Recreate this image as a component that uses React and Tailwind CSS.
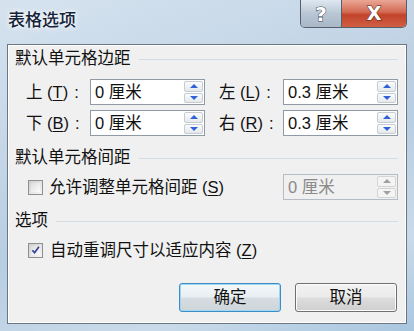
import React from 'react';

const font = { fontFamily: '"Liberation Sans", "Noto Sans CJK SC", sans-serif' };

function Key({ children }) {
  return <span className="underline underline-offset-2">{children}</span>;
}

function Spinner({ disabled }) {
  return (
    <div className="flex flex-col w-[20px] h-full py-[1px] pr-[1px] gap-[1px]">
      {['up', 'down'].map((d) => (
        <div
          key={d}
          className={`flex-1 flex items-center justify-center border rounded-[2px] ${
            disabled ? 'border-[#d4d4d4] bg-[#f4f4f4]' : 'border-[#c5ccd4] bg-[linear-gradient(#fbfbfb,#e6e9ec)]'
          }`}
        >
          {d === 'up' ? (
            <div
              className={`w-0 h-0 border-x-[4px] border-x-transparent border-b-[4px] ${
                disabled ? 'border-b-[#a0a0a0]' : 'border-b-[#2f62d8]'
              }`}
            />
          ) : (
            <div
              className={`w-0 h-0 border-x-[4px] border-x-transparent border-t-[4px] ${
                disabled ? 'border-t-[#a0a0a0]' : 'border-t-[#2f62d8]'
              }`}
            />
          )}
        </div>
      ))}
    </div>
  );
}

function SpinBox({ value, disabled }) {
  return (
    <div
      className={`flex items-stretch w-[115px] h-[26px] border ${
        disabled ? 'border-[#b5bcc4] bg-[#f0f0f0] text-[#8a8a8a]' : 'border-[#8f9aa6] bg-white text-[#111]'
      }`}
    >
      <div className="flex-1 flex items-center pl-[4px] text-[16.5px] leading-none whitespace-pre">{value}</div>
      <Spinner disabled={disabled} />
    </div>
  );
}

function Header({ children }) {
  return (
    <div className="flex items-center h-[20px] pl-[7px] pr-[8px]">
      <span className="text-[16.5px] leading-none text-[#111]">{children}</span>
      <div className="flex-1 h-px bg-[#d2dde6] ml-[8px] mt-[2px]" />
    </div>
  );
}

function Checkbox({ checked }) {
  return (
    <div className="w-[15px] h-[15px] border border-[#8e8f8f] bg-[linear-gradient(135deg,#cfcfcf,#f6f6f6)] p-[2px]">
      <div className="w-full h-full bg-[linear-gradient(135deg,#dedede,#fbfbfb)] flex items-center justify-center">
        {checked && (
          <svg width="10" height="10" viewBox="0 0 10 10">
            <path d="M1.5 5.2 L4 8 L8.8 1.5" fill="none" stroke="#2a3f9a" strokeWidth="1.8" />
          </svg>
        )}
      </div>
    </div>
  );
}

function Btn({ children, primary }) {
  return (
    <div
      className={`w-[102px] h-[29px] rounded-[3px] border flex items-center justify-center text-[16.5px] text-[#111] ${
        primary
          ? 'border-[#3d8dc4] shadow-[inset_0_0_0_1px_#9fd5f5] bg-[linear-gradient(#f3f8fb_0%,#e8eef2_48%,#d6dde2_52%,#cfd6da_100%)]'
          : 'border-[#707070] shadow-[inset_0_0_0_1px_#fcfcfc] bg-[linear-gradient(#f2f2f2_0%,#ebebeb_48%,#dddddd_52%,#cfcfcf_100%)]'
      }`}
    >
      {children}
    </div>
  );
}

const label = 'text-[16.5px] leading-none text-[#111] whitespace-pre';

function FieldLabel({ ch, k, className = '' }) {
  return (
    <div className={`w-[64px] ${label} ${className}`}>
      {ch} (<Key>{k}</Key>)<span className="ml-[6px]">:</span>
    </div>
  );
}

export default function App() {
  return (
    <div
      className="w-[414px] h-[331px] overflow-hidden flex flex-col bg-[linear-gradient(160deg,#d6e3ef_0%,#c3d5e6_35%,#b7cde2_55%,#c9dbea_80%,#a9c6df_100%)]"
      style={font}
    >
      {/* title bar */}
      <div className="flex h-[44px] shrink-0">
        <div className="pl-[8px] pt-[12px] text-[17px] leading-none font-medium text-[#13233a] [text-shadow:0_0_6px_#ffffff,0_0_3px_#ffffff]">
          表格选项
        </div>
        <div className="ml-auto mr-[7px] flex h-[28px] border border-t-0 border-[#56606c] rounded-b-[5px] overflow-hidden">
          <div className="w-[41px] flex items-center justify-center bg-[linear-gradient(#dfe8f1,#b9c7d5_50%,#a8b7c6)] border-r border-[#56606c]">
            <span
              className="text-[20px] font-bold text-white leading-none [-webkit-text-stroke:1px_#3a4450] [paint-order:stroke_fill]"
              style={{ fontFamily: '"DejaVu Sans", sans-serif' }}
            >
              ?
            </span>
          </div>
          <div className="w-[64px] flex items-center justify-center bg-[linear-gradient(#eaa796,#d26a52_45%,#c2432a_55%,#cf5f44)]">
            <span
              className="text-[19px] font-bold text-white leading-none [-webkit-text-stroke:1px_#4a2a24] [paint-order:stroke_fill]"
              style={{ fontFamily: '"DejaVu Sans", sans-serif' }}
            >
              X
            </span>
          </div>
        </div>
      </div>

      {/* content panel */}
      <div className="mx-[7px] h-[280px] border border-[#6c7682] bg-[#f0f0f0] shadow-[inset_0_0_0_1px_#ffffff] flex flex-col pt-[3px]">
        <Header>默认单元格边距</Header>

        <div className="flex flex-col gap-[5px] mt-[11px] pl-[18px]">
          <div className="flex items-center">
            <FieldLabel ch="上" k="T" />
            <SpinBox value="0 厘米" />
            <FieldLabel ch="左" k="L" className="ml-[14px]" />
            <SpinBox value="0.3 厘米" />
          </div>
          <div className="flex items-center">
            <FieldLabel ch="下" k="B" />
            <SpinBox value="0 厘米" />
            <FieldLabel ch="右" k="R" className="ml-[14px]" />
            <SpinBox value="0.3 厘米" />
          </div>
        </div>

        <div className="mt-[11px]">
          <Header>默认单元格间距</Header>
        </div>

        <div className="flex items-center mt-[7px] pl-[20px]">
          <Checkbox />
          <div className={`ml-[6px] ${label}`}>
            允许调整单元格间距 (<Key>S</Key>)
          </div>
          <div className="ml-auto mr-[8px]">
            <SpinBox value="0 厘米" disabled />
          </div>
        </div>

        <div className="mt-[10px]">
          <Header>选项</Header>
        </div>

        <div className="flex items-center h-[20px] mt-[10px] pl-[20px]">
          <Checkbox checked />
          <div className={`ml-[7px] ${label}`}>
            自动重调尺寸以适应内容 (<Key>Z</Key>)
          </div>
        </div>

        <div className="flex justify-end gap-[14px] mt-[23px] pr-[9px]">
          <Btn primary>确定</Btn>
          <Btn>取消</Btn>
        </div>
      </div>
    </div>
  );
}
